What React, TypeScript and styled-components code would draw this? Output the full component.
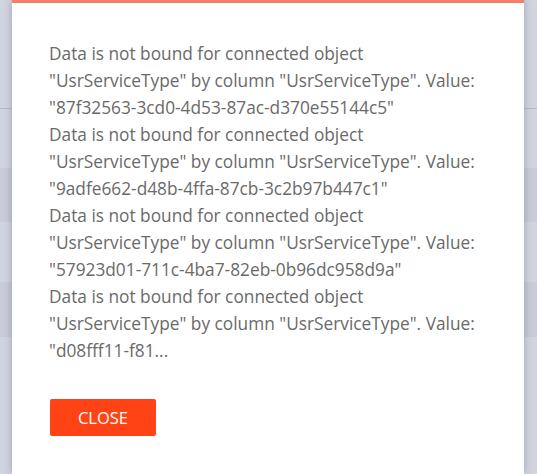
import React from "react";
import styled, { createGlobalStyle } from "styled-components";

const Global = createGlobalStyle`
  html, body { margin: 0; padding: 0; }
  body {
    width: 537px;
    height: 474px;
    overflow: hidden;
    background: #d2d4e0;
    font-family: "Open Sans", "Liberation Sans", sans-serif;
  }
`;

const Page = styled.div`
  position: relative;
  width: 537px;
  height: 474px;
  overflow: hidden;
`;

const Backdrop = styled.div`
  display: flex;
  flex-direction: column;
  height: 100%;
`;

const Band = styled.div<{ $h: number; $tone?: "dark" | "line" | "base" }>`
  height: ${(p) => p.$h}px;
  flex: none;
  background: ${(p) =>
    p.$tone === "dark" ? "#c9cbd8" : p.$tone === "line" ? "#b6b8c6" : "#d2d4e0"};
`;

const Modal = styled.div`
  position: absolute;
  left: 12px;
  top: 0;
  width: 512px;
  height: 474px;
  box-sizing: border-box;
  background: #fff;
  border-top: 3px solid #f58068;
  box-shadow: 0 0 8px rgba(60, 64, 90, 0.35);
  padding: 37px 30px 0 37px;
  display: flex;
  flex-direction: column;
  align-items: flex-start;
`;

const Messages = styled.div`
  width: 444px;
  font-size: 17.3px;
  line-height: 27px;
  color: #6a6a6a;
`;

const Line = styled.div`
  word-wrap: break-word;
`;

const Button = styled.button`
  margin-top: 35px;
  margin-left: 1px;
  width: 106px;
  height: 37px;
  border: none;
  border-radius: 2px;
  background: #ff4314;
  color: #fff;
  font-family: "Open Sans", "Liberation Sans", sans-serif;
  font-size: 16.5px;
  text-transform: uppercase;
  padding: 0;
  cursor: pointer;
`;

const guids = [
  '"87f32563-3cd0-4d53-87ac-d370e55144c5"',
  '"9adfe662-d48b-4ffa-87cb-3c2b97b447c1"',
  '"57923d01-711c-4ba7-82eb-0b96dc958d9a"',
  '"d08fff11-f81...',
];

export default function App() {
  return (
    <Page>
      <Global />
      <Backdrop>
        <Band $h={108} />
        <Band $h={1} $tone="line" />
        <Band $h={59} />
        <Band $h={54} $tone="dark" />
        <Band $h={60} />
        <Band $h={55} $tone="dark" />
        <Band $h={137} />
      </Backdrop>
      <Modal>
        <Messages>
          {guids.map((g) => (
            <Line key={g}>
              Data is not bound for connected object "UsrServiceType" by column
              "UsrServiceType". Value: {g}
            </Line>
          ))}
        </Messages>
        <Button>Close</Button>
      </Modal>
    </Page>
  );
}
